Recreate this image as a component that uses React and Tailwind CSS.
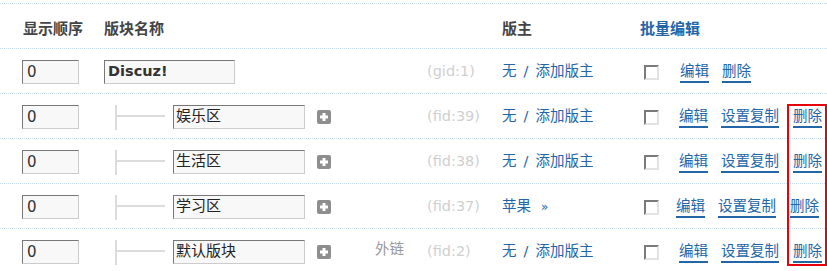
import React from "react";

const rows = [
  { id: "(fid:39)", name: "娱乐区", mod: null, shift: 0 },
  { id: "(fid:38)", name: "生活区", mod: null, shift: 0 },
  { id: "(fid:37)", name: "学习区", mod: "苹果", shift: -3 },
  { id: "(fid:2)", name: "默认版块", mod: null, shift: 0, link: true },
];

const font = { fontFamily: '"DejaVu Sans", "Noto Sans CJK SC", sans-serif' };

const OrderInput = () => (
  <div className="w-[57px] h-[24px] border border-t-[#777] border-l-[#777] border-b-[#ccc] border-r-[#ccc] bg-[#f8f8f8] flex items-center pl-[4px] text-[15px] text-[#333]">
    0
  </div>
);

const CheckBox = () => (
  <div className="w-[15px] h-[15px] border-2 border-t-[#7a7a7a] border-l-[#7a7a7a] border-b-[#e2e2e2] border-r-[#e2e2e2] bg-white" />
);

const Plus = () => (
  <svg width="14" height="14" viewBox="0 0 14 14">
    <rect x="0" y="0" width="14" height="14" rx="2" fill="#8e8e8e" />
    <rect x="3" y="5.5" width="8" height="3" fill="#fff" />
    <rect x="5.5" y="3" width="3" height="8" fill="#fff" />
  </svg>
);

const A = ({ children }) => (
  <span className="text-[#2366a8] underline underline-offset-[5px] decoration-[1.5px]">
    {children}
  </span>
);

const Modr = ({ name }) =>
  name ? (
    <span className="text-[#2366a8]">
      {name}
      <span className="ml-[10px] text-[12px]">»</span>
    </span>
  ) : (
    <span className="text-[#2366a8]">
      无<span className="mx-[7px]">/</span>添加版主
    </span>
  );

export default function App() {
  return (
    <div className="relative w-[827px] h-[271px] bg-white overflow-hidden pt-[3px]" style={font}>
      {/* header */}
      <div className="h-[45px] border-t border-dotted border-[#c4dcf0] flex items-center pt-[6px] text-[15px] font-bold text-[#444]">
        <div className="w-[104px] pl-[23px]">显示顺序</div>
        <div className="w-[398px]">版块名称</div>
        <div className="w-[138px]">版主</div>
        <div className="text-[#2366a8]">批量编辑</div>
      </div>

      {/* group row */}
      <div className="h-[45px] border-t border-dotted border-[#c4dcf0] flex items-center pt-[2px] text-[14.5px]">
        <div className="w-[104px] pl-[22px]">
          <OrderInput />
        </div>
        <div className="w-[323px]">
          <div className="w-[131px] h-[24px] border border-t-[#777] border-l-[#777] border-b-[#ccc] border-r-[#ccc] bg-[#f8f8f8] flex items-center pl-[3px] font-bold text-[#333]">
            Discuz!
          </div>
        </div>
        <div className="w-[75px] text-[#cfcfcf]">(gid:1)</div>
        <div className="w-[142px]">
          <Modr />
        </div>
        <div className="flex items-center">
          <CheckBox />
          <div className="ml-[21px]">
            <A>编辑</A>
          </div>
          <div className="ml-[13px]">
            <A>删除</A>
          </div>
        </div>
      </div>

      {rows.map((r) => (
        <div
          key={r.id}
          className="h-[45px] border-t border-dotted border-[#c4dcf0] flex items-center pt-[2px] text-[14.5px]"
        >
          <div className="w-[104px] pl-[22px]">
            <OrderInput />
          </div>
          <div className="w-[323px] flex items-center">
            <div className="ml-[11px] w-[2px] h-[25px] bg-[#dcdcdc]" />
            <div className="w-[48px] h-[2px] bg-[#dcdcdc] -mt-[2px]" />
            <div className="ml-[8px] w-[132px] h-[24px] border border-t-[#777] border-l-[#777] border-b-[#ccc] border-r-[#ccc] bg-[#f8f8f8] flex items-start pl-[2px] text-[15px] text-[#222] leading-[20px]">
              {r.name}
            </div>
            <div className="ml-[12px]">
              <Plus />
            </div>
            {r.link && <div className="ml-[44px] text-[#999] -mt-[4px]">外链</div>}
          </div>
          <div className="w-[75px] text-[#cfcfcf]">{r.id}</div>
          <div className="w-[142px]">
            <Modr name={r.mod} />
          </div>
          <div className="flex items-center">
            <CheckBox />
            <div className="flex items-center" style={{ marginLeft: 20 + r.shift }}>
              <A>编辑</A>
              <div className="ml-[13px]">
                <A>设置复制</A>
              </div>
              <div className="ml-[14px]">
                <A>删除</A>
              </div>
            </div>
          </div>
        </div>
      ))}

      {/* red annotation box */}
      <div className="absolute left-[787px] top-[104px] w-[40px] h-[162px] border-2 border-[#e8000b]" />
    </div>
  );
}
